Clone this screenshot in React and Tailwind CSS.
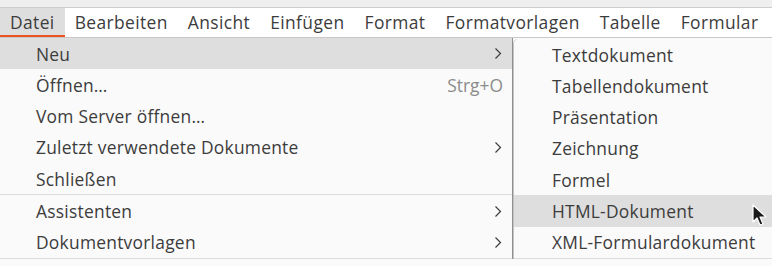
import React from 'react';

const menubar = ['Datei', 'Bearbeiten', 'Ansicht', 'Einfügen', 'Format', 'Formatvorlagen', 'Tabelle', 'Formular'];

const mainItems = [
  { label: 'Neu', sub: true, active: true },
  { label: 'Öffnen…', shortcut: 'Strg+O' },
  { label: 'Vom Server öffnen…' },
  { label: 'Zuletzt verwendete Dokumente', sub: true },
  { label: 'Schließen' },
  { sep: true },
  { label: 'Assistenten', sub: true },
  { label: 'Dokumentvorlagen', sub: true },
  { sep: true },
];

const subItems = [
  { label: 'Textdokument' },
  { label: 'Tabellendokument' },
  { label: 'Präsentation' },
  { label: 'Zeichnung' },
  { label: 'Formel' },
  { label: 'HTML-Dokument', active: true },
  { label: 'XML-Formulardokument' },
  { sep: true },
];

function Chevron() {
  return (
    <svg width="8" height="13" viewBox="0 0 8 13" className="shrink-0">
      <path d="M1.5 1.5 L6.5 6.5 L1.5 11.5" fill="none" stroke="#3d3d3d" strokeWidth="1.2" />
    </svg>
  );
}

function Cursor() {
  return (
    <svg width="16" height="24" viewBox="0 0 16 24" className="absolute left-[752px] top-[204px]">
      <path d="M1 1 L1 18 L5 14 L8 21 L11 20 L8 13 L14 13 Z" fill="#1a1a1a" stroke="#ffffff" strokeWidth="1.2" strokeLinejoin="round" />
    </svg>
  );
}

function MainRow({ item }) {
  if (item.sep) return <div className="h-px bg-[#dcdcdc]" />;
  return (
    <div className={`h-[31.3px] flex items-center pl-[36px] pr-[10px] ${item.active ? 'bg-[#dedede]' : ''}`}>
      <span className="flex-1">{item.label}</span>
      {item.shortcut && <span className="text-[#8c8c8c] mr-[-1px] tracking-normal">{item.shortcut}</span>}
      {item.sub && <Chevron />}
    </div>
  );
}

export default function App() {
  return (
    <div
      className="relative w-[772px] h-[266px] overflow-hidden bg-[#fafafa] text-[#3c3c3c] text-[17.4px] tracking-[0.25px]"
      style={{ fontFamily: '"Open Sans", "Noto Sans", sans-serif' }}
    >
      <div className="h-[8px] bg-[#efefef] border-b border-[#cdcdcd]" />
      <div className="h-[30px] bg-white flex border-b border-[#c8c8c8] tracking-[0.4px]">
        {menubar.map((m, i) => (
          <div
            key={m}
            className={`relative px-[10px] flex items-center leading-none ${i === 0 ? 'bg-[#dedede]' : ''}`}
          >
            {m}
            {i === 0 && <div className="absolute left-0 right-0 bottom-0 h-[2px] bg-[#e95420]" />}
          </div>
        ))}
      </div>
      <div className="flex">
        <div className="w-[513px] rounded-tl-[4px] border-r border-[#8f8f8f] bg-[#fafafa]">
          {mainItems.map((item, i) => (
            <MainRow key={i} item={item} />
          ))}
        </div>
        <div className="flex-1 mt-px rounded-tl-[5px] border-l border-[#c4c4c4] bg-[#fafafa] overflow-hidden">
          {subItems.map((item, i) =>
            item.sep ? (
              <div key={i} className="h-px bg-[#dcdcdc]" />
            ) : (
              <div
                key={i}
                className={`h-[31.3px] flex items-center pl-[38px] ${item.active ? 'bg-[#dedede]' : ''}`}
              >
                {item.label}
              </div>
            )
          )}
        </div>
      </div>
      <Cursor />
    </div>
  );
}
